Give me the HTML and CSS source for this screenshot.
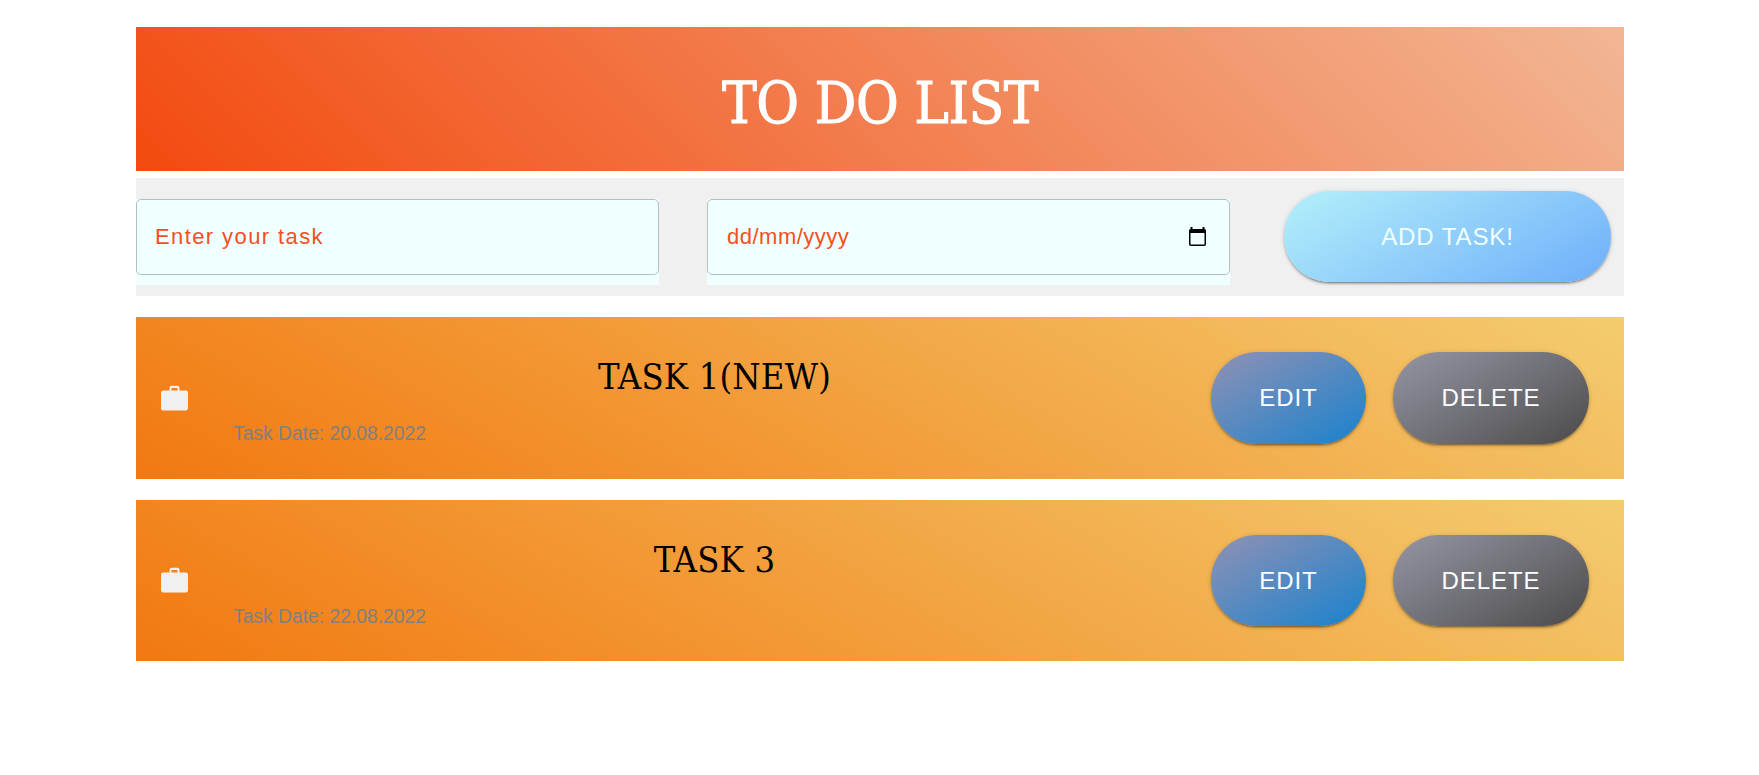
FILE: index.html
```html
<!DOCTYPE html>
<html lang="en">
<head>
<meta charset="utf-8">
<title>To Do List</title>
<link rel="stylesheet" href="styles.css">
</head>
<body>
<main class="app">
  <header class="banner"><h1 class="banner-title">TO DO LIST</h1></header>
  <form class="task-form">
    <div class="field"><input class="field-input" type="text" placeholder="Enter your task"></div>
    <div class="field">
      <div class="field-input date-input">
        <span>dd/mm/yyyy</span>
        <svg class="calendar" viewBox="0 0 17 19"><path d="M1.500 0h2v2h10V0h2v2A1.700 1.700 0 0 1 17 3.700V17.300A1.700 1.700 0 0 1 15.300 19H1.700A1.700 1.700 0 0 1 0 17.300V3.700A1.700 1.700 0 0 1 1.500 2zM1.500 6v11.500h14V6z" fill-rule="evenodd"/></svg>
      </div>
    </div>
    <button class="btn btn-add" type="button">ADD TASK!</button>
  </form>
  <section class="task">
    <svg class="briefcase" viewBox="0 0 27 26"><path d="M8.500 5.500V3a2.200 2.200 0 0 1 2.200-2.200h5.600A2.200 2.200 0 0 1 18.500 3v2.500h6.300A2.200 2.200 0 0 1 27 7.700v15.600a2.200 2.200 0 0 1-2.200 2.200H2.200A2.200 2.200 0 0 1 0 23.300V7.700a2.200 2.200 0 0 1 2.200-2.200zm2 0h6V2.900h-6z" fill-rule="evenodd"/></svg>
    <div class="task-text">
      <h2 class="task-name">TASK 1(NEW)</h2>
      <p class="task-date">Task Date: 20.08.2022</p>
    </div>
    <button class="btn btn-edit" type="button">EDIT</button>
    <button class="btn btn-delete" type="button">DELETE</button>
  </section>
  <section class="task task-last">
    <svg class="briefcase" viewBox="0 0 27 26"><path d="M8.500 5.500V3a2.200 2.200 0 0 1 2.200-2.200h5.600A2.200 2.200 0 0 1 18.500 3v2.500h6.300A2.200 2.200 0 0 1 27 7.700v15.600a2.200 2.200 0 0 1-2.200 2.200H2.200A2.200 2.200 0 0 1 0 23.300V7.700a2.200 2.200 0 0 1 2.200-2.200zm2 0h6V2.900h-6z" fill-rule="evenodd"/></svg>
    <div class="task-text">
      <h2 class="task-name">TASK 3</h2>
      <p class="task-date">Task Date: 22.08.2022</p>
    </div>
    <button class="btn btn-edit" type="button">EDIT</button>
    <button class="btn btn-delete" type="button">DELETE</button>
  </section>
</main>
</body>
</html>
```
FILE: styles.css
```css
* { box-sizing: border-box; }
body {
  margin: 0;
  background: #fff;
  font-family: "Liberation Sans", Arial, sans-serif;
}
.app {
  width: 1488px;
  margin-left: 136px;
  padding-top: 27px;
}
.banner {
  height: 144px;
  display: flex;
  align-items: center;
  justify-content: center;
  background: linear-gradient(45deg, #f34a0f, #f2b694);
}
.banner-title {
  margin: 7px 0 0;
  color: #fff;
  font: 400 58px/1 "DejaVu Serif Condensed", "DejaVu Serif", serif;
  font-stretch: condensed;
  letter-spacing: -0.5px;
  -webkit-text-stroke: 1px #fff;
}
.task-form {
  display: flex;
  align-items: flex-start;
  height: 118px;
  margin-top: 7px;
  padding-right: 13px;
  background: #f0f0f0;
}
.field {
  width: 523px;
  height: 86px;
  margin: 21px 48px 0 0;
  background: #f0ffff;
}
.field-input {
  display: block;
  width: 100%;
  height: 76px;
  padding: 0 18px;
  border: 1px solid #b4c0c0;
  border-radius: 5px;
  background: #f0ffff;
  color: #f4501e;
  font: 22px "Liberation Sans", Arial, sans-serif;
  letter-spacing: 1.4px;
}
.field-input::placeholder { color: #f4501e; opacity: 1; }
.date-input {
  display: flex;
  align-items: center;
  justify-content: space-between;
  padding: 0 23px 0 19px;
  letter-spacing: 0.5px;
}
.calendar { width: 17px; height: 19px; margin-bottom: 2px; }
.btn {
  flex: none;
  height: 92px;
  padding: 0;
  border: 0;
  border-radius: 46px;
  font: 24px "Liberation Sans", Arial, sans-serif;
  letter-spacing: 0.9px;
  color: #fff;
  box-shadow: 0 3px 1px -2px rgba(0,0,0,.2), 0 2px 2px rgba(0,0,0,.2), 0 1px 5px rgba(0,0,0,.16);
}
.btn-add {
  width: 327px;
  height: 91px;
  margin: 13px 0 0 auto;
  color: #f0ffff;
  background: linear-gradient(150deg, #b4f0fa, #6eaefa);
}
.btn-edit {
  width: 155px;
  margin-right: 27px;
  background: linear-gradient(150deg, #9191b4, #1982cd);
}
.btn-delete {
  width: 196px;
  background: linear-gradient(150deg, #9696a5, #4b4b4b);
}
.task {
  display: flex;
  align-items: center;
  height: 162px;
  margin-top: 21px;
  padding: 0 35px 0 24px;
  background: linear-gradient(30deg, #f27810, #f3cc70);
}
.task-last { height: 161px; }
.task-last .btn { height: 91px; }
.briefcase {
  width: 27px;
  height: 26px;
  margin: 0 -1px 1px 1px;
  fill: #f0f0f0;
}
.task-text {
  width: 963px;
  margin: 3px auto 0 46px;
}
.task-name {
  margin: 0;
  text-align: center;
  color: #000;
  font: 400 36px/48px "DejaVu Serif Condensed", "DejaVu Serif", serif;
  font-stretch: condensed;
  letter-spacing: 0.2px;
}
.task-date {
  margin: 21px 0 0;
  color: #808080;
  font-size: 19.3px;
  line-height: 24px;
}
```
